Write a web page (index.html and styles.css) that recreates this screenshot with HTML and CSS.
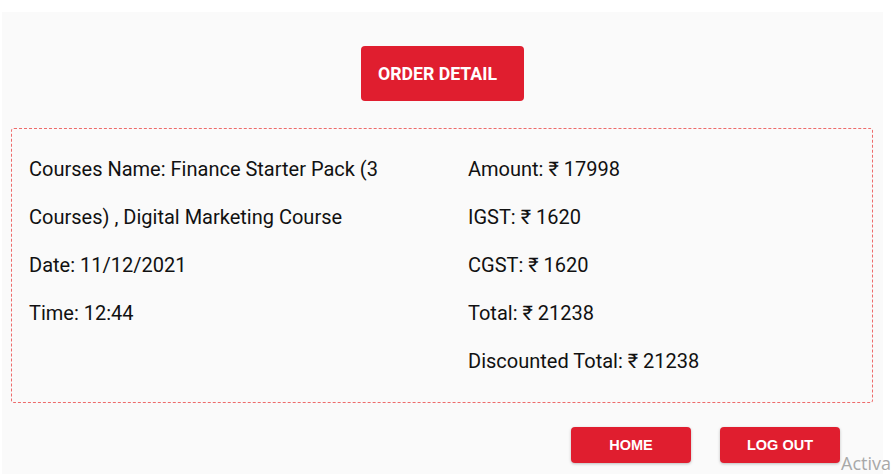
FILE: index.html
```html
<!DOCTYPE html>
<html>
<head>
<meta charset="utf-8">
<link rel="stylesheet" href="styles.css">
</head>
<body>
<div class="panel">
  <div class="title-row">
    <button class="title-btn">ORDER DETAIL</button>
  </div>
  <div class="details">
    <div class="col col-left">
      <p>Courses Name: Finance Starter Pack (3 Courses) , Digital Marketing Course</p>
      <p>Date: 11/12/2021</p>
      <p>Time: 12:44</p>
    </div>
    <div class="col col-right">
      <p>Amount: ₹ 17998</p>
      <p>IGST: ₹ 1620</p>
      <p>CGST: ₹ 1620</p>
      <p>Total: ₹ 21238</p>
      <p>Discounted Total: ₹ 21238</p>
    </div>
  </div>
  <div class="actions">
    <button class="act-btn">HOME</button>
    <button class="act-btn">LOG OUT</button>
  </div>
</div>
<div class="watermark">Activa</div>
</body>
</html>
```

FILE: styles.css
```css
html, body {
  margin: 0;
  padding: 0;
  background: #ffffff;
  overflow: hidden;
  height: 474px;
}
body {
  font-family: Roboto, "Liberation Sans", sans-serif;
  color: #111111;
}
.panel {
  margin: 12px 11px 0 2px;
  background: #fafafa;
  height: 462px;
  padding-top: 34px;
  box-sizing: border-box;
}
.title-row {
  display: flex;
  justify-content: center;
}
.title-btn {
  width: 163px;
  height: 55px;
  background: #e01e2f;
  color: #ffffff;
  border: none;
  border-radius: 4px;
  font-family: Roboto, sans-serif;
  font-weight: 700;
  font-size: 17.7px;
  text-align: left;
  padding: 0 0 0 17px;
}
.details {
  margin: 27px 10px 0 9px;
  height: 275px;
  box-sizing: border-box;
  border: 1px dashed #ee6b6b;
  border-radius: 3px;
  padding: 16px 0 0 17px;
  display: flex;
}
.col p {
  margin: 0;
  font-size: 20px;
  line-height: 48px;
}
.col-left {
  width: 400px;
  padding-right: 39px;
}
.col-right {
  flex: 1;
}
.actions {
  display: flex;
  justify-content: flex-end;
  gap: 29px;
  margin: 24px 43px 0 0;
}
.act-btn {
  width: 120px;
  height: 36px;
  background: #e01e2f;
  color: #ffffff;
  border: none;
  border-radius: 4px;
  box-shadow: 0 1px 3px rgba(0,0,0,0.25);
  font-family: "Liberation Sans", Arial, sans-serif;
  font-weight: 700;
  font-size: 14.5px;
  padding: 0;
}
.watermark {
  position: absolute;
  left: 841px;
  top: 451px;
  font-family: "Open Sans", "DejaVu Sans", sans-serif;
  font-size: 18px;
  color: #a8a8a8;
  white-space: nowrap;
}
```
